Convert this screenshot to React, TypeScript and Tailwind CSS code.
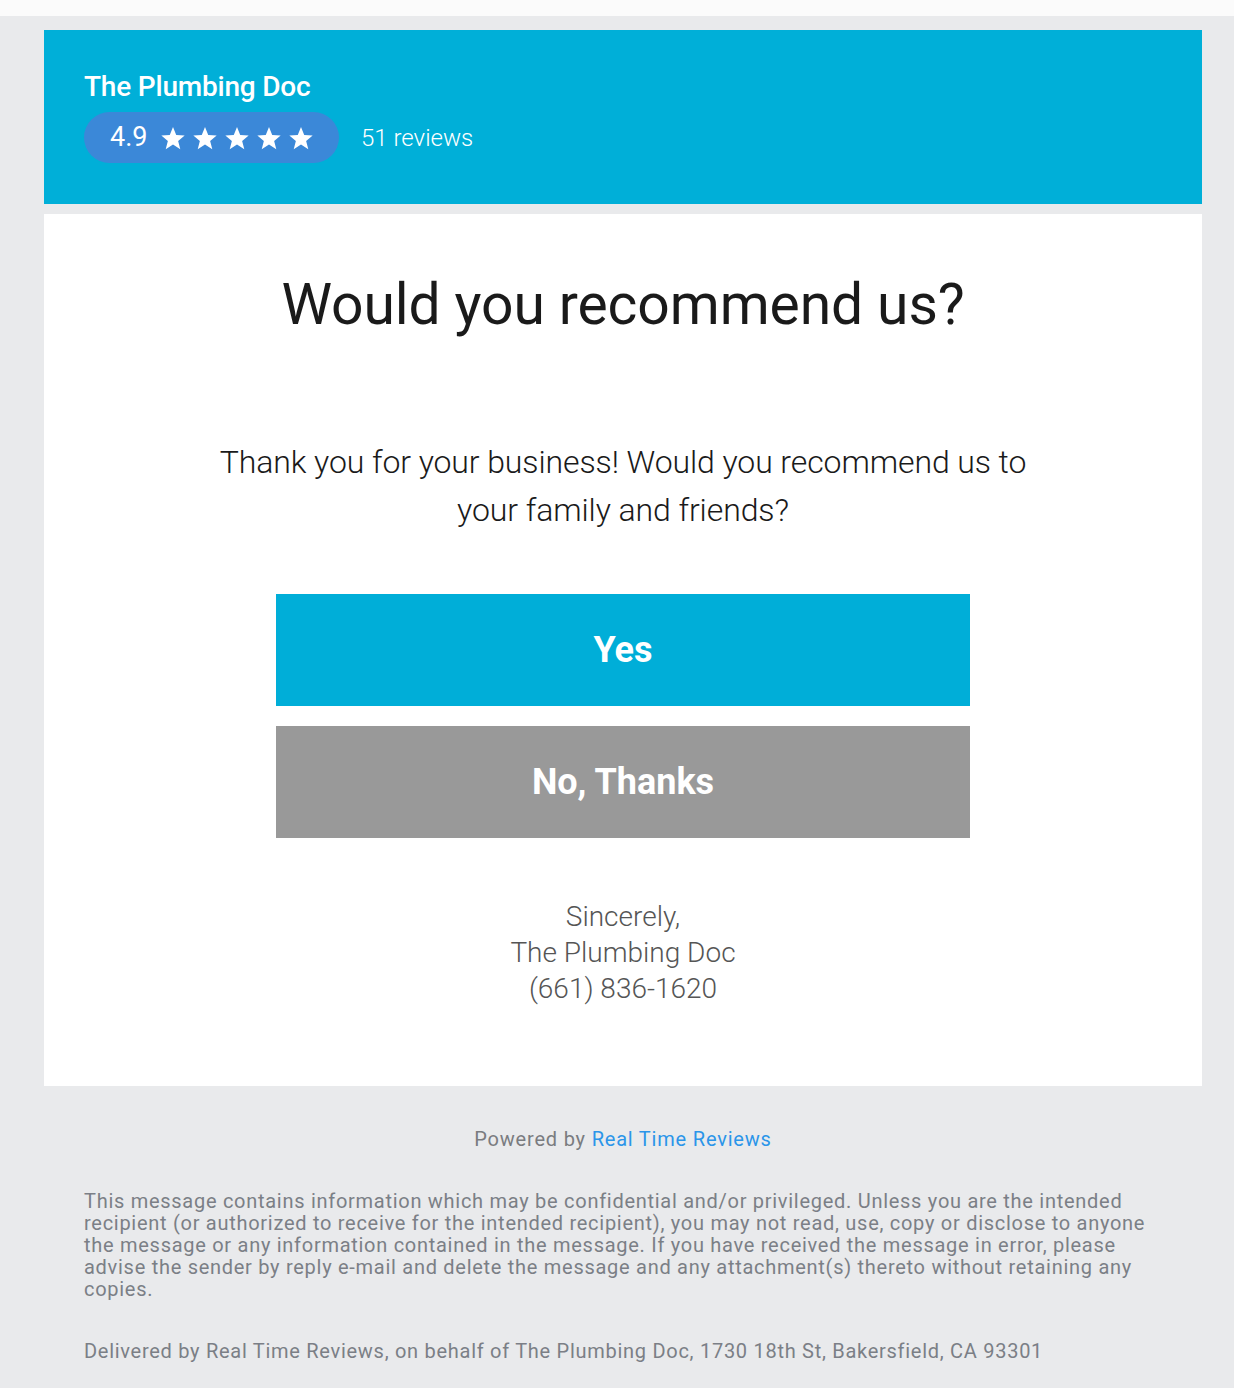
import React from "react";

export default function App() {
  const font = { fontFamily: "Roboto, 'Liberation Sans', sans-serif" };
  return (
    <div className="w-[1234px] min-h-[1388px] bg-white" style={font}>
      <div className="h-[16px] bg-[#fbfbfb]" />
      <div className="bg-[#e9eaec] pt-[14px] pb-[26px] pl-[44px] pr-[32px]">
        <div className="w-[1158px]">
          <div className="bg-[#00afd8] h-[174px] px-[40px] pt-[40px]">
            <div className="text-white text-[28px] leading-[34px] font-medium tracking-[-0.2px]">The Plumbing Doc</div>
            <div className="flex items-center mt-[8px]">
              <div className="h-[51px] w-[255px] rounded-full bg-[#3b88d8] flex items-center pl-[26px]">
                <span className="text-white text-[27px] leading-none">4.9</span>
                <span className="flex ml-[12px] gap-[4px]">
                  {[0, 1, 2, 3, 4].map((i) => (
                    <svg key={i} width="28" height="28" viewBox="0 0 24 24" fill="white">
                      <path d="M12 2.5l2.75 6.9 7.25.45-5.6 4.65 1.85 7.1L12 17.6l-6.25 4 1.85-7.1L2 9.85l7.25-.45z" />
                    </svg>
                  ))}
                </span>
              </div>
              <span className="text-white text-[24px] ml-[22px] font-light">51 reviews</span>
            </div>
          </div>
          <div className="bg-white mt-[10px] h-[872px] flex flex-col items-center pt-[56px]">
            <h1 className="text-[57px] leading-[70px] text-[#1a1a1a] font-normal tracking-[-0.1px]">Would you recommend us?</h1>
            <p className="mt-[98px] text-[32px] leading-[48px] font-light text-[#1a1a1a] text-center w-[840px] tracking-[-0.1px]">
              Thank you for your business! Would you recommend us to your family and friends?
            </p>
            <div className="mt-[60px] w-[694px] flex flex-col gap-[20px]">
              <div className="h-[112px] bg-[#00aed8] flex items-center justify-center text-white text-[36px] font-bold">Yes</div>
              <div className="h-[112px] bg-[#999999] flex items-center justify-center text-white text-[36px] font-bold">No, Thanks</div>
            </div>
            <div className="mt-[61px] text-center text-[28px] leading-[36px] font-light text-[#555555]">
              <div>Sincerely,</div>
              <div>The Plumbing Doc</div>
              <div>(661) 836-1620</div>
            </div>
          </div>
          <div className="pt-[40px] text-center text-[20px] leading-[26px] text-[#7a7c80] tracking-[0.8px]">
            Powered by <span className="text-[#2b95e9]">Real Time Reviews</span>
          </div>
          <div className="mt-[38px] px-[40px] text-[20px] leading-[22px] text-[#7b7f86] tracking-[0.72px]">
            This message contains information which may be confidential and/or privileged. Unless you are the intended recipient (or authorized to receive for the intended recipient), you may not read, use, copy or disclose to anyone the message or any information contained in the message. If you have received the message in error, please advise the sender by reply e-mail and delete the message and any attachment(s) thereto without retaining any copies.
          </div>
          <div className="mt-[40px] px-[40px] text-[20px] leading-[22px] text-[#7b7f86] tracking-[0.72px]">
            Delivered by Real Time Reviews, on behalf of The Plumbing Doc, 1730 18th St, Bakersfield, CA 93301
          </div>
        </div>
      </div>
    </div>
  );
}
